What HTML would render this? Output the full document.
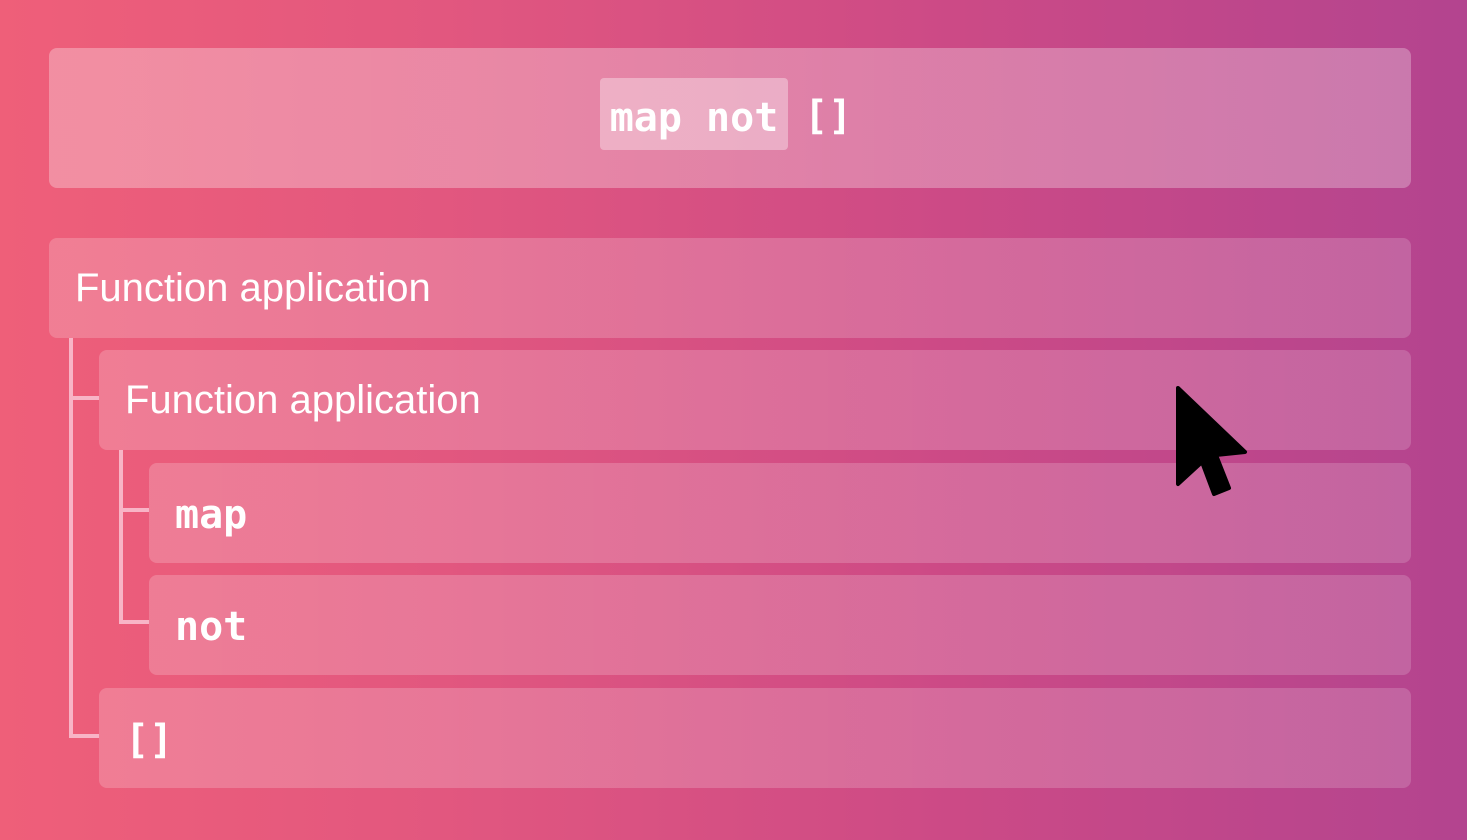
<!DOCTYPE html>
<html><head><meta charset="utf-8"><style>
*{margin:0;padding:0;box-sizing:border-box}
body{width:1467px;height:840px;overflow:hidden;background:linear-gradient(90deg,#ef5f79 0%,#e2577f 30%,#cc4a86 65%,#b3448f 100%);position:relative;font-family:"Liberation Sans",sans-serif;color:#fff}
.b{position:absolute;border-radius:8px;background:linear-gradient(90deg,rgba(255,255,255,.2),rgba(255,255,255,.17));display:flex;align-items:center}
.top{left:49px;top:48px;width:1362px;height:140px;background:linear-gradient(90deg,rgba(255,255,255,.3),rgba(255,255,255,.28))}
.m{font-family:"DejaVu Sans Mono","Liberation Mono",monospace;font-weight:bold;font-size:39px}
.hl{position:absolute;left:551px;top:30px;width:188px;height:72px;background:rgba(255,255,255,.35);border-radius:4px;display:flex;align-items:center;justify-content:center;font-size:40px;padding-top:8px}
.s{font-size:40px;padding-left:26px}
.l{position:absolute;background:#f8b4c6}
</style></head><body>
<div class="b top"><span class="m hl">map not</span><span class="m" style="position:absolute;left:755px;top:38px;font-size:40px;line-height:60px">[]</span></div>
<div class="b" style="left:49px;top:238px;width:1362px;height:100px"><span class="s">Function application</span></div>
<div class="b" style="left:99px;top:350px;width:1312px;height:100px"><span class="s">Function application</span></div>
<div class="b" style="left:149px;top:463px;width:1262px;height:100px"><span class="s m" style="padding-top:4px">map</span></div>
<div class="b" style="left:149px;top:575px;width:1262px;height:100px"><span class="s m" style="padding-top:4px">not</span></div>
<div class="b" style="left:99px;top:688px;width:1312px;height:100px"><span class="s m" style="padding-top:4px">[]</span></div>
<div class="l" style="left:69px;top:338px;width:4px;height:400px"></div>
<div class="l" style="left:69px;top:396px;width:30px;height:4px"></div>
<div class="l" style="left:69px;top:734px;width:30px;height:4px"></div>
<div class="l" style="left:119px;top:450px;width:4px;height:174px"></div>
<div class="l" style="left:119px;top:508px;width:30px;height:4px"></div>
<div class="l" style="left:119px;top:620px;width:30px;height:4px"></div>
<svg style="position:absolute;left:0;top:0" width="1467" height="840"><path d="M1178 388 L1245 452 L1216 455 L1229 488 L1214 494 L1202 462 L1178 484 Z" fill="#000" stroke="#000" stroke-width="4" stroke-linejoin="round"/></svg>
</body></html>
